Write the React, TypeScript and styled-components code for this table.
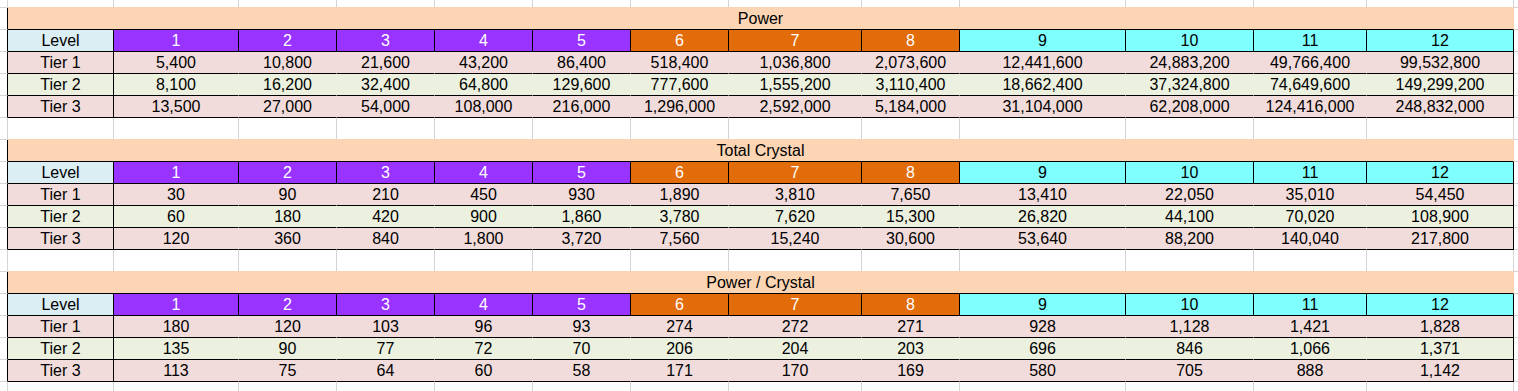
import React from 'react'
import styled, { createGlobalStyle } from 'styled-components'

const GRID = '#d4d4d4'
const INK = '#000000'
const PEACH = '#fcd5b4'

// sheet columns, each width includes its own right gridline
const COLUMNS = '8px 106px 125px 98px 98px 98px 98px 98px 133px 98px 166px 128px 113px 147px 4px'

const GlobalStyle = createGlobalStyle`
  html, body {
    margin: 0;
    padding: 0;
    background: #ffffff;
    overflow: hidden;
  }
  body {
    font-family: 'Liberation Sans', Arial, sans-serif;
  }
`

const Sheet = styled.div`
  width: 1518px;
  height: 391px;
  overflow: hidden;
  display: flex;
  flex-direction: column;
  background: #ffffff;
`

const Row = styled.div<{ $h: number }>`
  display: grid;
  grid-template-columns: ${COLUMNS};
  height: ${({ $h }) => $h}px;
  flex: 0 0 auto;
`

const Cell = styled.div<{ $bg?: string; $fg?: string; $right?: string; $bottom?: string; $span?: number }>`
  box-sizing: border-box;
  ${({ $span }) => ($span ? `grid-column: span ${$span};` : '')}
  background: ${({ $bg }) => $bg || 'transparent'};
  color: ${({ $fg }) => $fg || '#000000'};
  border-right: 1px solid ${({ $right }) => $right || GRID};
  border-bottom: 1px solid ${({ $bottom }) => $bottom || GRID};
  font-size: 16px;
  line-height: 22px;
  text-align: center;
  white-space: nowrap;
  overflow: hidden;
`

const Tail = styled(Cell)`
  border-right: none;
`

type Group = { bg: string; fg: string }
const PURPLE: Group = { bg: '#9933ff', fg: '#ffffff' }
const ORANGE: Group = { bg: '#e26b0a', fg: '#ffffff' }
const CYAN: Group = { bg: '#80ffff', fg: '#000000' }

const levels: Group[] = [
  PURPLE, PURPLE, PURPLE, PURPLE, PURPLE,
  ORANGE, ORANGE, ORANGE,
  CYAN, CYAN, CYAN, CYAN,
]

const tierColors = ['#f2dcdb', '#ebf1de', '#f2dcdb']

const tables = [
  {
    title: 'Power',
    rows: [
      ['5,400', '10,800', '21,600', '43,200', '86,400', '518,400', '1,036,800', '2,073,600', '12,441,600', '24,883,200', '49,766,400', '99,532,800'],
      ['8,100', '16,200', '32,400', '64,800', '129,600', '777,600', '1,555,200', '3,110,400', '18,662,400', '37,324,800', '74,649,600', '149,299,200'],
      ['13,500', '27,000', '54,000', '108,000', '216,000', '1,296,000', '2,592,000', '5,184,000', '31,104,000', '62,208,000', '124,416,000', '248,832,000'],
    ],
  },
  {
    title: 'Total Crystal',
    rows: [
      ['30', '90', '210', '450', '930', '1,890', '3,810', '7,650', '13,410', '22,050', '35,010', '54,450'],
      ['60', '180', '420', '900', '1,860', '3,780', '7,620', '15,300', '26,820', '44,100', '70,020', '108,900'],
      ['120', '360', '840', '1,800', '3,720', '7,560', '15,240', '30,600', '53,640', '88,200', '140,040', '217,800'],
    ],
  },
  {
    title: 'Power / Crystal',
    rows: [
      ['180', '120', '103', '96', '93', '274', '272', '271', '928', '1,128', '1,421', '1,828'],
      ['135', '90', '77', '72', '70', '206', '204', '203', '696', '846', '1,066', '1,371'],
      ['113', '75', '64', '60', '58', '171', '170', '169', '580', '705', '888', '1,142'],
    ],
  },
]

function BlankRow({ h, aboveTable }: { h: number; aboveTable?: boolean }) {
  return (
    <Row $h={h}>
      <Cell />
      {Array.from({ length: 13 }, (_, i) => (
        <Cell key={i} $bottom={aboveTable ? PEACH : GRID} />
      ))}
      <Tail />
    </Row>
  )
}

function Table({ title, rows }: { title: string; rows: string[][] }) {
  return (
    <>
      <Row $h={22}>
        <Cell $right={INK} />
        <Cell $span={13} $bg={PEACH} $right={PEACH} $bottom={INK}>
          {title}
        </Cell>
        <Tail />
      </Row>
      <Row $h={22}>
        <Cell $right={INK} />
        <Cell $bg="#daeef3" $right={INK} $bottom={INK}>
          Level
        </Cell>
        {levels.map((g, i) => (
          <Cell key={i} $bg={g.bg} $fg={g.fg} $right={INK} $bottom={INK}>
            {i + 1}
          </Cell>
        ))}
        <Tail />
      </Row>
      {rows.map((values, r) => {
        const bg = tierColors[r]
        return (
          <Row $h={22} key={r}>
            <Cell $right={INK} />
            <Cell $bg={bg} $right={INK} $bottom={INK}>
              Tier {r + 1}
            </Cell>
            {values.map((v, i) => (
              <Cell key={i} $bg={bg} $right={i === values.length - 1 ? INK : bg} $bottom={INK}>
                {v}
              </Cell>
            ))}
            <Tail />
          </Row>
        )
      })}
    </>
  )
}

export default function App() {
  return (
    <Sheet>
      <GlobalStyle />
      <BlankRow h={8} aboveTable />
      <Table {...tables[0]} />
      <BlankRow h={22} aboveTable />
      <Table {...tables[1]} />
      <BlankRow h={22} aboveTable />
      <Table {...tables[2]} />
      <BlankRow h={10} />
    </Sheet>
  )
}
